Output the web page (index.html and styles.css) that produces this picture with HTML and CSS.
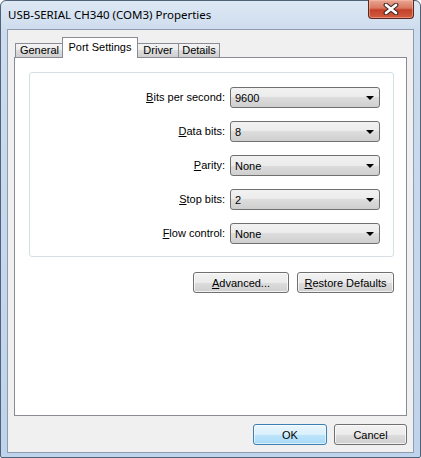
FILE: index.html
```html
<!DOCTYPE html>
<html lang="en">
<head>
    <meta charset="UTF-8">
    <title>USB-SERIAL CH340 (COM3) Properties</title>
    <link rel="stylesheet" href="styles.css">
</head>
<body>
    <div class="window">
        <div class="titlebar">
            <span class="title">USB-SERIAL CH340 (COM3) Properties</span>
            <div class="close">
                <svg width="16" height="12" viewBox="0 0 16 12">
                    <path d="M3 2 L13 10 M13 2 L3 10" stroke="#3a2420" stroke-width="4.8" stroke-linecap="round"/>
                    <path d="M3 2 L13 10 M13 2 L3 10" stroke="#ffffff" stroke-width="2.8" stroke-linecap="round"/>
                </svg>
            </div>
        </div>

        <div class="client">
            <div class="tabs">
                <div class="tab tab-general">General</div>
                <div class="tab tab-port active">Port Settings</div>
                <div class="tab tab-driver">Driver</div>
                <div class="tab tab-details">Details</div>
            </div>

            <div class="panel">
                <div class="group">
                    <span class="label"><u>B</u>its per second:</span>
                    <div class="combo"><span>9600</span><i class="arrow"></i></div>

                    <span class="label"><u>D</u>ata bits:</span>
                    <div class="combo"><span>8</span><i class="arrow"></i></div>

                    <span class="label"><u>P</u>arity:</span>
                    <div class="combo"><span>None</span><i class="arrow"></i></div>

                    <span class="label"><u>S</u>top bits:</span>
                    <div class="combo"><span>2</span><i class="arrow"></i></div>

                    <span class="label"><u>F</u>low control:</span>
                    <div class="combo"><span>None</span><i class="arrow"></i></div>
                </div>

                <div class="actions">
                    <button class="btn btn-advanced"><u>A</u>dvanced...</button>
                    <button class="btn btn-restore"><u>R</u>estore Defaults</button>
                </div>
            </div>

            <div class="footer">
                <button class="btn btn-ok default">OK</button>
                <button class="btn btn-cancel">Cancel</button>
            </div>
        </div>
    </div>
</body>
</html>
```

FILE: styles.css
```css
* { margin: 0; padding: 0; box-sizing: border-box; }
body {
    width: 421px;
    height: 458px;
    background: #ffffff;
    font-family: 'Liberation Sans', Arial, sans-serif;
    font-size: 11px;
    color: #000;
    overflow: hidden;
}
.window {
    width: 421px;
    height: 458px;
    border: 1px solid #4f6278;
    border-radius: 6px 6px 2px 2px;
    background: linear-gradient(to bottom, #dde8f4 0px, #cddcee 30px, #bed3ec 100%);
    display: flex;
    flex-direction: column;
}
.titlebar {
    height: 28px;
    display: flex;
    justify-content: space-between;
    align-items: flex-start;
    padding: 0 6px 0 7px;
}
.title {
    font-family: 'Noto Sans', 'Open Sans', sans-serif;
    font-size: 11.5px;
    line-height: 28px;
    color: #000;
}
.close {
    width: 46px;
    height: 19px;
    margin-top: -1px;
    border: 1px solid #5a2a22;
    border-top: none;
    border-radius: 0 0 4px 4px;
    background: linear-gradient(to bottom, #e9a795 0%, #d8785f 45%, #c4412a 55%, #d35c40 100%);
    box-shadow: inset 0 0 0 1px rgba(255, 200, 180, 0.45);
    display: flex;
    justify-content: center;
    align-items: center;
}
.client {
    flex: 1;
    margin: 0 6px 4px 6px;
    border: 1px solid #8e9cae;
    background: #f0f0f0;
    display: flex;
    flex-direction: column;
    padding: 7px 0 7px 0;
}
.tabs {
    height: 21px;
    margin: 0 0 -1px 7px;
    display: flex;
    align-items: flex-end;
    position: relative;
    z-index: 1;
}
.tab {
    height: 15px;
    border: 1px solid #898c95;
    border-right: none;
    background: linear-gradient(to bottom, #f3f3f3 0%, #ebebeb 50%, #dddddd 50%, #cfcfcf 100%);
    line-height: 13px;
    text-align: center;
}
.tab-general { width: 48px; }
.tab-port { width: 76px; }
.tab-driver { width: 41px; }
.tab-details { width: 42px; border-right: 1px solid #898c95; }
.tab.active {
    height: 21px;
    margin: 0 -1px 0 -1px;
    border-right: 1px solid #898c95;
    border-bottom: none;
    background: #ffffff;
    line-height: 18px;
}
.panel {
    height: 359px;
    margin: 0 6px;
    border: 1px solid #898c95;
    background: #ffffff;
    padding: 14px 12px 0 14px;
}
.group {
    height: 185px;
    border: 1px solid #d5dfe5;
    border-radius: 3px;
    padding: 14px 13px 12px 0;
    display: grid;
    grid-template-columns: 1fr 150px;
    grid-auto-rows: 21px;
    column-gap: 5px;
    row-gap: 13px;
}
.label {
    text-align: right;
    line-height: 21px;
}
.combo {
    border: 1px solid #707070;
    border-radius: 3px;
    background: linear-gradient(to bottom, #f2f2f2 0%, #ebebeb 50%, #dddddd 50%, #cfcfcf 100%);
    display: flex;
    justify-content: space-between;
    align-items: center;
    padding: 0 5px 0 4px;
}
.arrow {
    width: 0;
    height: 0;
    border-left: 4px solid transparent;
    border-right: 4px solid transparent;
    border-top: 4px solid #000;
    margin-top: 1px;
}
.actions {
    margin-top: 15px;
    display: flex;
    justify-content: flex-end;
    gap: 8px;
}
.btn {
    height: 21px;
    border: 1px solid #707070;
    border-radius: 3px;
    background: linear-gradient(to bottom, #f2f2f2 0%, #ebebeb 50%, #dddddd 50%, #cfcfcf 100%);
    box-shadow: inset 0 0 0 1px rgba(255, 255, 255, 0.7);
    font-family: 'Liberation Sans', Arial, sans-serif;
    font-size: 11px;
    color: #000;
}
.btn-advanced { width: 96px; }
.btn-restore { width: 97px; }
.btn-ok { width: 74px; }
.btn-cancel { width: 73px; }
.btn.default {
    border-color: #3c7fb1;
    background: linear-gradient(to bottom, #eaf6fd 0%, #d9f0fc 50%, #bee6fd 50%, #a7d9f5 100%);
    box-shadow: inset 0 0 0 1px rgba(255, 255, 255, 0.6);
}
.footer {
    margin: 8px 6px 0 0;
    display: flex;
    justify-content: flex-end;
    gap: 7px;
}
```
